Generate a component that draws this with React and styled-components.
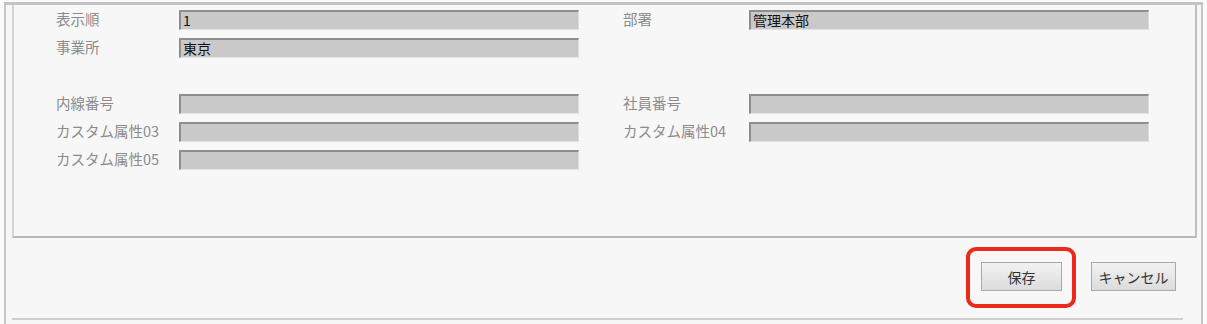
import styled, { createGlobalStyle } from "styled-components";

const GlobalStyle = createGlobalStyle`
  body {
    margin: 0;
    background: #fbfbfb;
    font-family: "Noto Sans CJK JP", "Noto Sans", sans-serif;
  }
`;

const Frame = styled.div`
  box-sizing: border-box;
  width: 1199px;
  height: 322px;
  margin: 2px 0 0 4px;
  padding: 0 0 0 6px;
  background: #f7f7f7;
  border-top: 3px solid #c4c4c4;
  border-left: 2px solid #c6c6c6;
  border-right: 2px solid #c6c6c6;
  overflow: hidden;
`;

const Panel = styled.div`
  box-sizing: border-box;
  width: 1185px;
  height: 233px;
  padding: 5px 0 0 42px;
  border-left: 2px solid #d4d4d4;
  border-right: 2px solid #c0c0c0;
  border-bottom: 2px solid #b8b8b8;
`;

const Grid = styled.div`
  display: grid;
  grid-template-columns: 123px 400px 44px 126px 400px;
  grid-auto-rows: 20px;
  row-gap: 8px;
  align-items: center;
`;

const Spacer = styled.div`
  grid-column: 1 / -1;
  height: 16px;
`;

const Label = styled.div`
  grid-column: ${(p) => (p.$right ? 4 : 1)};
  align-self: start;
  font-size: 14.5px;
  line-height: 17px;
  color: #8c8c8c;
  white-space: nowrap;
`;

const Field = styled.div`
  grid-column: ${(p) => (p.$right ? 5 : 2)};
  box-sizing: border-box;
  height: 20px;
  padding: 0 0 0 2px;
  background: #c9c9c9;
  border-top: 2px solid #8e8e8e;
  border-left: 2px solid #8e8e8e;
  border-right: 1px solid #dedede;
  border-bottom: 1px solid #e2e2e2;
  font-size: 14px;
  line-height: 17px;
  color: #111;
`;

const Footer = styled.div`
  display: flex;
  justify-content: flex-end;
  gap: 29px;
  height: 82px;
  box-sizing: border-box;
  padding: 24px 7px 0 0;
  border-bottom: 2px solid #cfcfcf;
  width: 1171px;
`;

const Highlight = styled.span`
  position: relative;
  display: inline-flex;
  height: 29px;
  &::after {
    content: "";
    position: absolute;
    top: -15px;
    left: -15px;
    right: -14px;
    bottom: -17px;
    border: 4px solid #ec2a1c;
    border-radius: 10px;
    pointer-events: none;
  }
`;

const Button = styled.button`
  box-sizing: border-box;
  width: ${(p) => p.$w}px;
  height: 29px;
  padding: 0;
  border: 1px solid #a9a9a9;
  background: linear-gradient(#f2f2f2, #dcdcdc);
  font-family: inherit;
  font-size: 14px;
  color: #333;
`;

export default function App() {
  return (
    <>
      <GlobalStyle />
      <Frame>
        <Panel>
          <Grid>
            <Label>表示順</Label>
            <Field>1</Field>
            <Label $right>部署</Label>
            <Field $right>管理本部</Field>
            <Label>事業所</Label>
            <Field>東京</Field>
            <Spacer />
            <Label>内線番号</Label>
            <Field />
            <Label $right>社員番号</Label>
            <Field $right />
            <Label>カスタム属性03</Label>
            <Field />
            <Label $right>カスタム属性04</Label>
            <Field $right />
            <Label>カスタム属性05</Label>
            <Field />
          </Grid>
        </Panel>
        <Footer>
          <Highlight>
            <Button $w={81}>保存</Button>
          </Highlight>
          <Button $w={85}>キャンセル</Button>
        </Footer>
      </Frame>
    </>
  );
}
